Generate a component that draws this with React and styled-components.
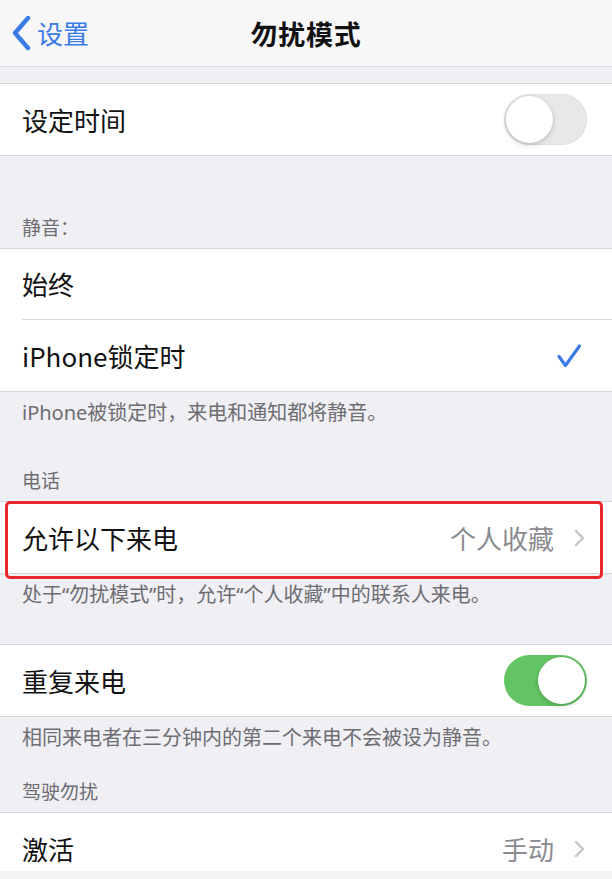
import React from 'react'
import styled, { createGlobalStyle } from 'styled-components'

const GlobalStyle = createGlobalStyle`
  html, body {
    margin: 0;
    padding: 0;
    background: #efeff4;
  }
  * {
    box-sizing: border-box;
  }
`

const font = `"Noto Sans CJK SC", "Noto Sans", sans-serif`

const Page = styled.div`
  width: 612px;
  height: 879px;
  overflow: hidden;
  background: #efeff4;
  font-family: ${font};
  color: #111;
`

const NavBar = styled.div`
  height: 67px;
  background: #f7f7f8;
  border-bottom: 1px solid #d9d9dc;
  display: grid;
  grid-template-columns: 1fr auto 1fr;
  align-items: center;
`

const BackButton = styled.div`
  display: flex;
  align-items: center;
  gap: 6px;
  padding-left: 11px;
  color: #3a7be5;
  font-size: 26px;
  line-height: 1;
`

const Title = styled.div`
  font-size: 27px;
  font-weight: 700;
  letter-spacing: 0.8px;
  color: #111;
`

const Spacer = styled.div`
  height: ${p => p.h}px;
`

const Group = styled.div`
  position: relative;
  background: #fff;
  border-top: 1px solid #d6d6da;
  border-bottom: ${p => (p.open ? 'none' : '1px solid #d6d6da')};
`

const Row = styled.div`
  height: ${p => (p.cut ? 58 : 71)}px;
  overflow: ${p => (p.cut ? 'hidden' : 'visible')};
  padding-left: 22px;
  display: flex;
  align-items: flex-start;
`

const RowBody = styled.div`
  flex: 1;
  height: 71px;
  display: flex;
  align-items: center;
  padding-right: 25px;
  border-bottom: ${p => (p.divider ? '1px solid #dadade' : 'none')};
`

const Label = styled.div`
  flex: 1;
  font-size: 26px;
  line-height: 1.2;
  color: #111;
`

const Value = styled.div`
  font-size: 26px;
  line-height: 1.2;
  color: #8b8b90;
  margin-right: 20px;
`

const Header = styled.div`
  padding: ${p => p.top}px 22px 9px;
  font-size: 19px;
  line-height: 24px;
  color: #6d6d72;
`

const Footer = styled.div`
  padding: 9px 22px 0;
  font-family: "Noto Sans", "Noto Sans CJK SC", sans-serif;
  font-size: 20px;
  line-height: 24px;
  color: #6d6d72;
`

const Toggle = styled.div`
  position: relative;
  width: 83px;
  height: 51px;
  border-radius: 26px;
  background: ${p => (p.on ? '#62c462' : '#e8e8ea')};
  box-shadow: ${p => (p.on ? 'none' : 'inset 0 0 0 1px #e0e0e3')};
`

const Knob = styled.div`
  position: absolute;
  top: 2px;
  left: ${p => (p.on ? '34px' : '2px')};
  width: 47px;
  height: 47px;
  border-radius: 50%;
  background: #fff;
  box-shadow: 0 2px 5px rgba(0, 0, 0, 0.18), 0 0 0 0.5px rgba(0, 0, 0, 0.06);
`

const Highlight = styled.div`
  position: absolute;
  top: -1px;
  left: 5px;
  right: 9px;
  bottom: -6px;
  border: 3px solid #e8262b;
  border-radius: 5px;
  pointer-events: none;
`

const BottomStrip = styled.div`
  height: 8px;
  background: #f3f3f6;
`

const BackChevron = () => (
  <svg width="20" height="36" viewBox="0 0 20 36">
    <path d="M17 3 L4 18 L17 33" fill="none" stroke="#3a7be5" strokeWidth="4.4"
      strokeLinecap="round" strokeLinejoin="round" />
  </svg>
)

const Chevron = () => (
  <svg width="11" height="18" viewBox="0 0 11 18" style={{ marginRight: 2 }}>
    <path d="M2 2 L9 9 L2 16" fill="none" stroke="#c4c4c8" strokeWidth="2.4"
      strokeLinecap="round" strokeLinejoin="round" />
  </svg>
)

const Check = () => (
  <svg width="26" height="26" viewBox="0 0 26 26" style={{ marginRight: 5 }}>
    <path d="M3 13.5 L9.5 22.5 L23.5 3" fill="none" stroke="#3a7be5" strokeWidth="3.2"
      strokeLinecap="round" strokeLinejoin="round" />
  </svg>
)

const Switch = ({ on }) => (
  <Toggle on={on ? 1 : 0}>
    <Knob on={on ? 1 : 0} />
  </Toggle>
)

export default function App() {
  return (
    <Page>
      <GlobalStyle />
      <NavBar>
        <BackButton>
          <BackChevron />
          设置
        </BackButton>
        <Title>勿扰模式</Title>
        <div />
      </NavBar>

      <Spacer h={16} />
      <Group>
        <Row>
          <RowBody>
            <Label>设定时间</Label>
            <Switch />
          </RowBody>
        </Row>
      </Group>

      <Header top={59}>静音：</Header>
      <Group>
        <Row>
          <RowBody divider>
            <Label>始终</Label>
          </RowBody>
        </Row>
        <Row>
          <RowBody>
            <Label>iPhone锁定时</Label>
            <Check />
          </RowBody>
        </Row>
      </Group>
      <Footer>iPhone被锁定时，来电和通知都将静音。</Footer>

      <Header top={43}>电话</Header>
      <Group>
        <Row>
          <RowBody>
            <Label>允许以下来电</Label>
            <Value>个人收藏</Value>
            <Chevron />
          </RowBody>
        </Row>
        <Highlight />
      </Group>
      <Footer>处于“勿扰模式”时，允许“个人收藏”中的联系人来电。</Footer>

      <Spacer h={37} />
      <Group>
        <Row>
          <RowBody>
            <Label>重复来电</Label>
            <Switch on />
          </RowBody>
        </Row>
      </Group>
      <Footer>相同来电者在三分钟内的第二个来电不会被设为静音。</Footer>

      <Header top={29}>驾驶勿扰</Header>
      <Group open>
        <Row cut>
          <RowBody>
            <Label>激活</Label>
            <Value>手动</Value>
            <Chevron />
          </RowBody>
        </Row>
      </Group>
      <BottomStrip />
    </Page>
  )
}
